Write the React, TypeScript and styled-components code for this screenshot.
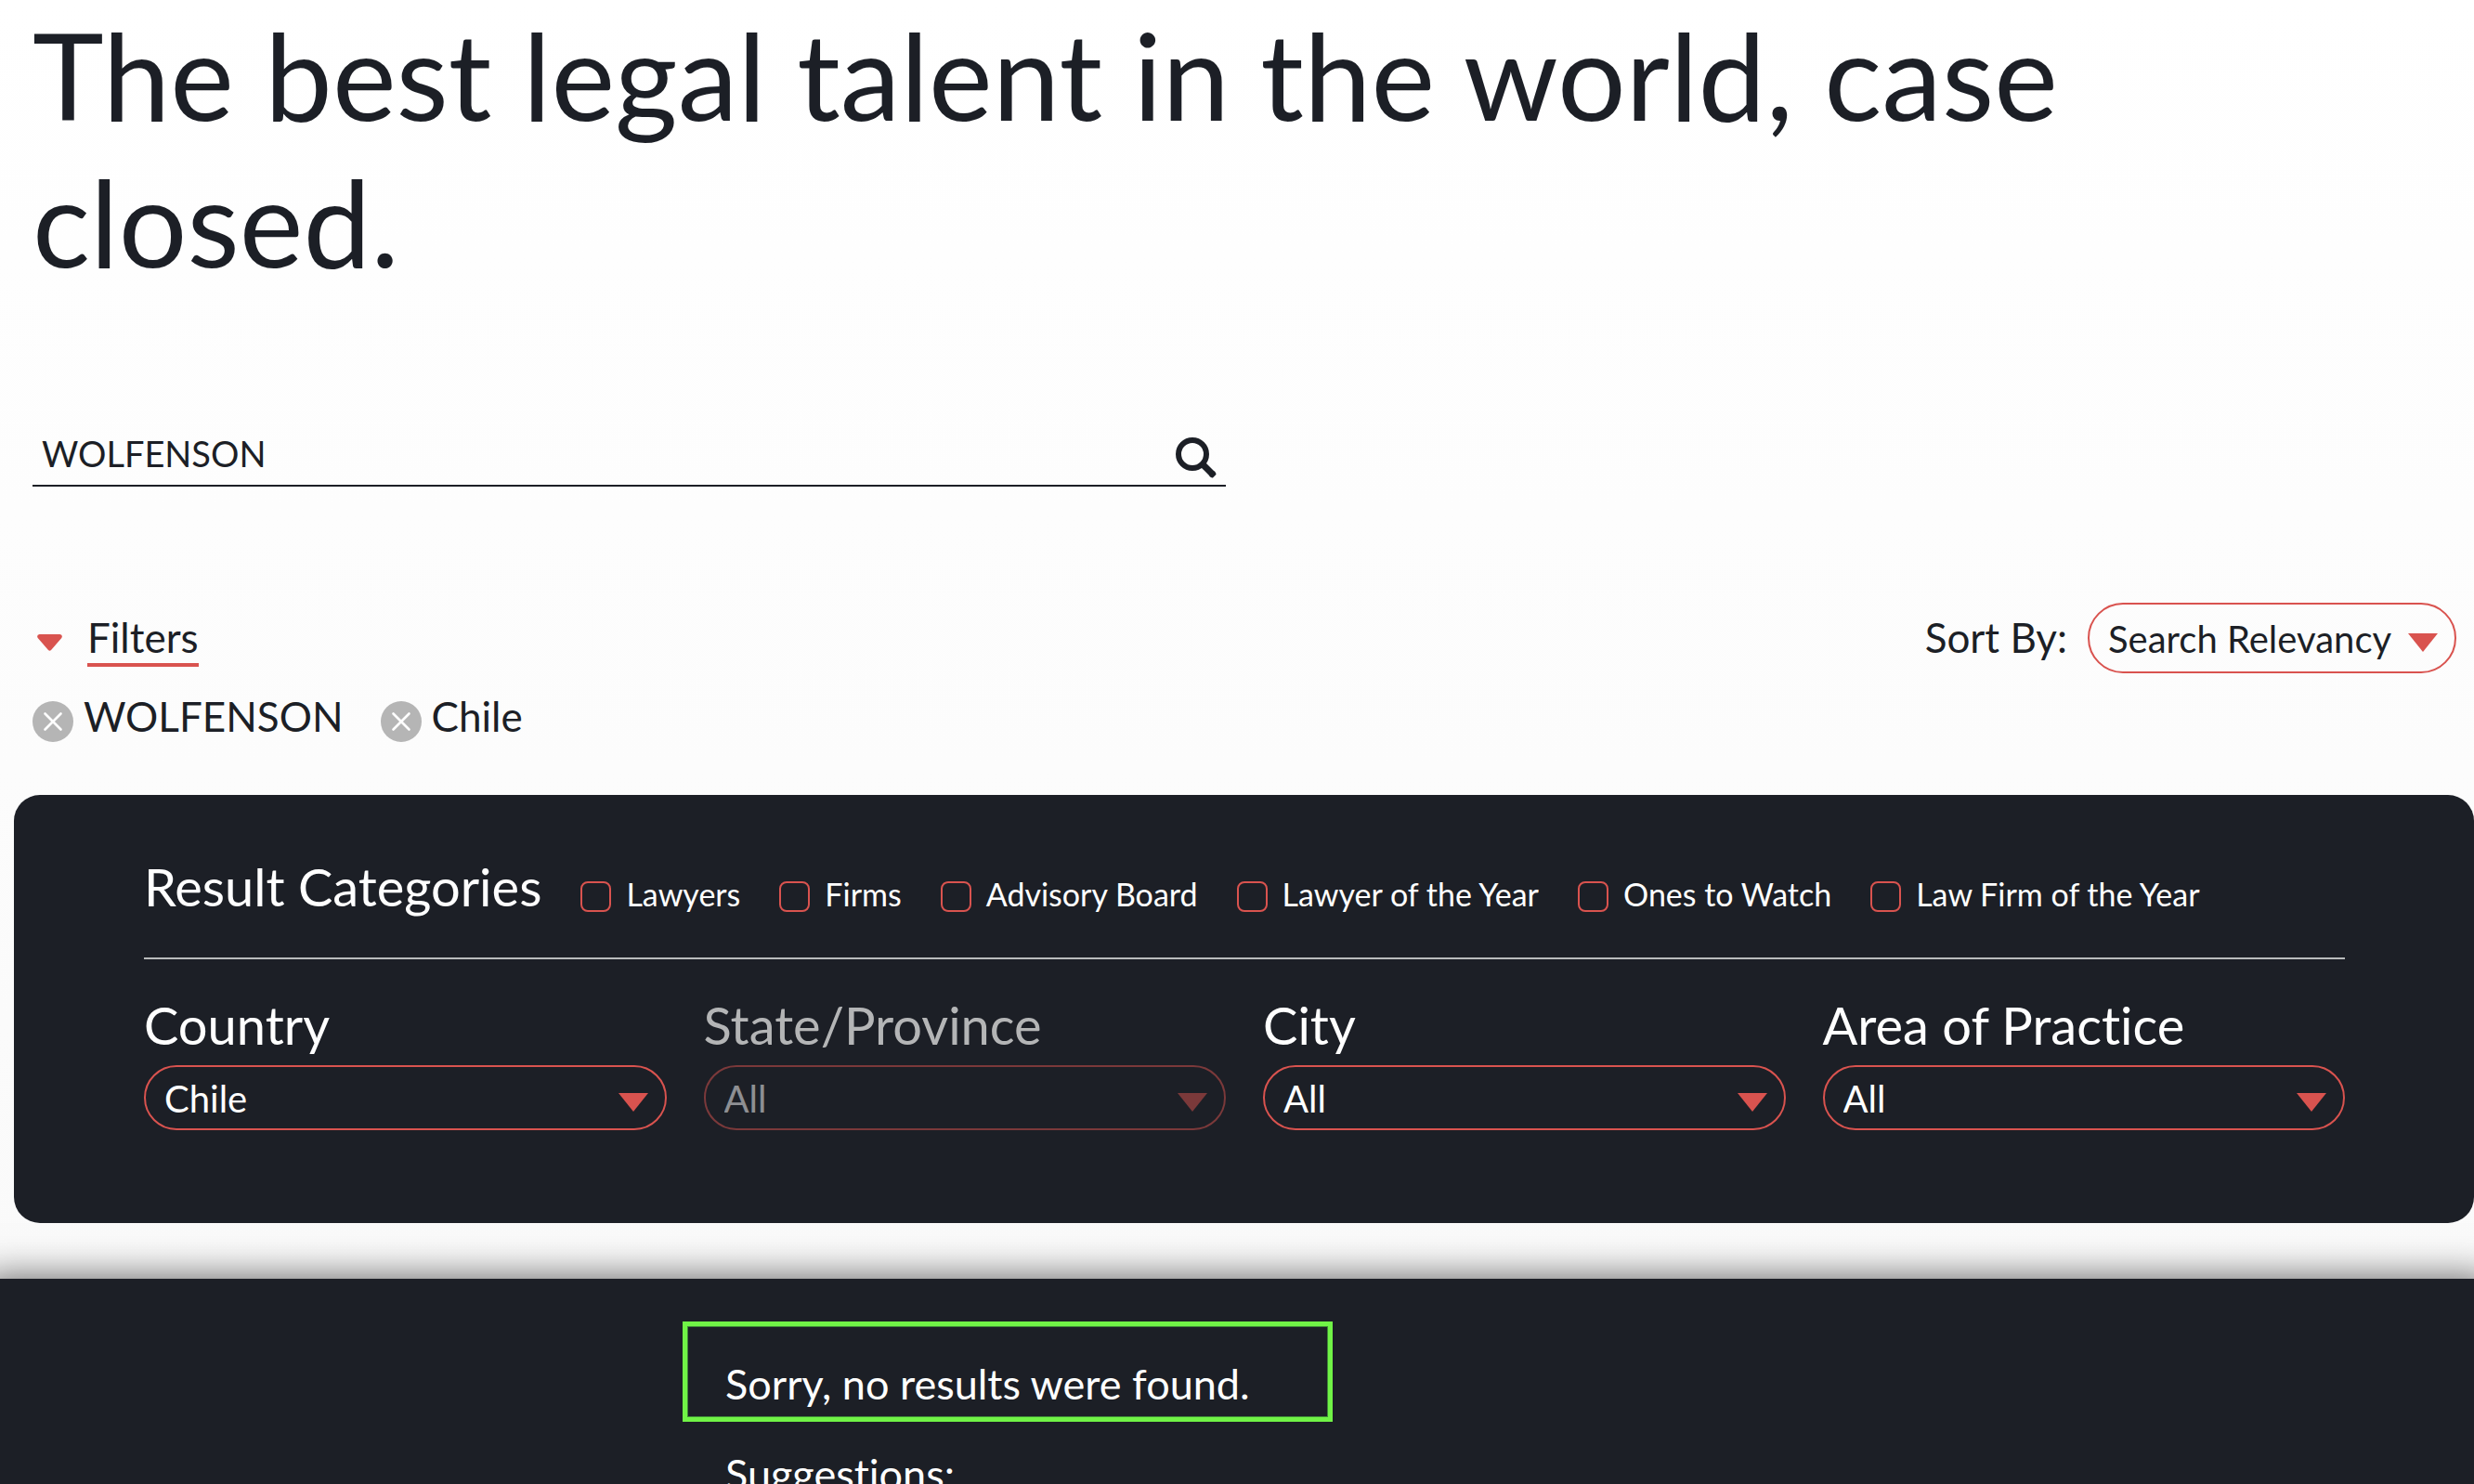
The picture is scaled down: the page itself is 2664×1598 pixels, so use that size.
import React, { useState } from "react";
import styled, { createGlobalStyle } from "styled-components";

const ink = "#1c1f26";
const coral = "#d9534f";

const GlobalStyle = createGlobalStyle`
  *, *::before, *::after {
    box-sizing: border-box;
  }

  body {
    margin: 0;
    background: ${ink};
    color: ${ink};
    font-family: Lato, "Open Sans", sans-serif;
    font-size: 44px;
    font-variant-ligatures: none;
  }

  button, input, select {
    font-family: inherit;
    color: inherit;
  }
`;

const Page = styled.div`
  display: flex;
  flex-direction: column;
  height: 100vh;
  overflow: hidden;
`;

const SearchArea = styled.main`
  flex: none;
  padding-bottom: 60px;
  background: linear-gradient(#ffffff, #fafafa);
`;

const Intro = styled.div`
  padding: 1px 19px 57px 35px;
`;

const Title = styled.h1`
  max-width: 92%;
  margin: 0;
  font-size: 130px;
  font-weight: 400;
  line-height: 158px;
`;

const SearchGrid = styled.div`
  display: grid;
  grid-template-columns: 1fr 1fr;
  gap: 40px;
  margin-top: 135px;
`;

const SearchForm = styled.form`
  display: flex;
  align-items: center;
  border-bottom: 2px solid ${ink};
`;

const SearchInput = styled.input`
  flex: 1;
  min-width: 0;
  height: 70px;
  padding: 2px 10px 0;
  border: 0;
  outline: 0;
  background: transparent;
  font-size: 38px;
`;

const IconButton = styled.button`
  display: flex;
  padding: 0;
  border: 0;
  background: transparent;
  cursor: pointer;
`;

const SearchButton = styled(IconButton)`
  padding: 12px 10px 0 0;
`;

const Toolbar = styled.div`
  display: flex;
  align-items: baseline;
  justify-content: space-between;
  margin-top: 125px;
`;

const FilterToggle = styled.button`
  display: flex;
  align-items: baseline;
  gap: 27px;
  padding: 0 0 0 5px;
  border: 0;
  background: transparent;
  font-size: 44px;
  cursor: pointer;
`;

const FilterText = styled.span`
  padding-bottom: 6px;
  border-bottom: 4px solid ${coral};
  line-height: 44px;
`;

const SortGroup = styled.div`
  display: flex;
  align-items: baseline;
  gap: 22px;
`;

const SelectBox = styled.div<{ $muted?: boolean }>`
  position: relative;
  opacity: ${(p) => (p.$muted ? 0.5 : 1)};
`;

const Select = styled.select<{ $tall?: boolean }>`
  display: block;
  width: 100%;
  height: ${(p) => (p.$tall ? 76 : 70)}px;
  padding: 2px ${(p) => (p.$tall ? 67 : 60)}px 0 20px;
  border: 2px solid ${coral};
  border-radius: 38px;
  outline: 0;
  appearance: none;
  background: transparent;
  font-size: 40px;
  cursor: pointer;

  &:disabled {
    opacity: 1;
    cursor: default;
  }

  option {
    color: ${ink};
  }
`;

const Arrow = styled.svg`
  position: absolute;
  top: 50%;
  right: 20px;
  width: 32px;
  height: 20px;
  margin-top: -5px;
  fill: ${coral};
  pointer-events: none;
`;

const Tags = styled.ul`
  display: flex;
  gap: 40px;
  margin: 30px 0 0;
  padding: 0;
  list-style: none;
`;

const Tag = styled.li`
  display: flex;
  align-items: flex-start;
  gap: 11px;
  line-height: 32px;
`;

const Panel = styled.section`
  margin-left: 15px;
  padding: 65px 139px 100px 140px;
  border-radius: 28px;
  background: ${ink};
  color: #fff;
`;

const Categories = styled.fieldset`
  display: flex;
  align-items: center;
  flex-wrap: wrap;
  gap: 0 42px;
  min-width: 0;
  margin: 0;
  padding: 0 0 42px;
  border: 0;
  border-bottom: 2px solid #b9bbbc;
`;

const PanelHeading = styled.h2`
  margin: 0;
  font-size: 56px;
  font-weight: 400;
  line-height: 68px;
`;

const CheckLabel = styled.label`
  display: flex;
  align-items: center;
  gap: 16px;
  padding-top: 16px;
  font-size: 34px;
  line-height: 40px;
  cursor: pointer;
`;

const Checkbox = styled.input`
  width: 33px;
  height: 33px;
  margin: 4px 0 0;
  border: 2px solid ${coral};
  border-radius: 8px;
  appearance: none;

  &:checked {
    background: ${coral};
  }
`;

const Fields = styled.div`
  display: grid;
  grid-template-columns: repeat(4, 1fr);
  gap: 40px;
  margin-top: 37px;
`;

const FieldLabel = styled.label<{ $muted?: boolean }>`
  display: block;
  margin-bottom: 9px;
  color: ${(p) => (p.$muted ? "#b4b5b6" : "#fff")};
  font-size: 56px;
  line-height: 68px;
`;

const Results = styled.section`
  flex: 1 0 auto;
  padding: 46px 0 0 735px;
  background: ${ink};
  box-shadow: 0 20px 40px 20px rgba(0, 0, 0, 0.65);
  color: #fff;
  font-size: 45px;
`;

const Notice = styled.p`
  width: 700px;
  margin: 0;
  padding: 38px 0 12px 41px;
  border: 5px solid #70f346;
  box-shadow: inset 0 0 0 1px #3f8a37;
  line-height: 48px;
`;

const Suggestions = styled.p`
  margin: 32px 0 0 46px;
  line-height: 48px;
`;

type SelectFieldProps = {
  id: string;
  options: string[];
  tall?: boolean;
  disabled?: boolean;
};

function SelectField({ id, options, tall, disabled }: SelectFieldProps) {
  return (
    <SelectBox $muted={disabled}>
      <Select id={id} $tall={tall} disabled={disabled}>
        {options.map((option) => (
          <option key={option}>{option}</option>
        ))}
      </Select>
      <Arrow viewBox="0 0 32 20" aria-hidden="true">
        <path d="M0 0H32L16 20Z" />
      </Arrow>
    </SelectBox>
  );
}

const categories = [
  "Lawyers",
  "Firms",
  "Advisory Board",
  "Lawyer of the Year",
  "Ones to Watch",
  "Law Firm of the Year",
];

const fields = [
  { id: "country", label: "Country", options: ["Chile"] },
  { id: "state", label: "State/Province", options: ["All"], disabled: true },
  { id: "city", label: "City", options: ["All"] },
  { id: "practice", label: "Area of Practice", options: ["All"] },
];

export default function App() {
  const [query, setQuery] = useState("WOLFENSON");
  const [tags, setTags] = useState(["WOLFENSON", "Chile"]);
  const [open, setOpen] = useState(true);

  return (
    <>
      <GlobalStyle />
      <Page>
        <SearchArea>
          <Intro>
            <Title>The best legal talent in the world, case closed.</Title>
            <SearchGrid>
              <SearchForm role="search" onSubmit={(e) => e.preventDefault()}>
                <SearchInput
                  aria-label="Search"
                  value={query}
                  onChange={(e) => setQuery(e.target.value)}
                />
                <SearchButton type="submit" aria-label="Search">
                  <svg width="44" height="44" viewBox="0 0 44 44" fill="none" stroke={ink}>
                    <circle cx="18" cy="18" r="15" strokeWidth="6" />
                    <path d="M28 28L39.500 39.500" strokeWidth="7" />
                    <path d="M37.500 41.500L41.500 37.500L42.500 39.500L39.500 42.500Z" fill={ink} strokeWidth="2" strokeLinejoin="round" />
                  </svg>
                </SearchButton>
              </SearchForm>
            </SearchGrid>
            <Toolbar>
              <FilterToggle type="button" aria-expanded={open} onClick={() => setOpen(!open)}>
                <svg width="27" height="20" viewBox="0 0 27 20" fill={coral} aria-hidden="true">
                  <path d="M2.500 0H24.500Q28 .8 26.300 4L15 17Q13.500 18.600 12 17L.7 4Q-1 .8 2.500 0Z" />
                </svg>
                <FilterText>Filters</FilterText>
              </FilterToggle>
              <SortGroup>
                <label htmlFor="sort">Sort By:</label>
                <SelectField id="sort" tall options={["Search Relevancy"]} />
              </SortGroup>
            </Toolbar>
            <Tags>
              {tags.map((tag) => (
                <Tag key={tag}>
                  <IconButton
                    type="button"
                    aria-label={`Remove ${tag}`}
                    onClick={() => setTags(tags.filter((t) => t !== tag))}
                  >
                    <svg width="44" height="44" viewBox="0 0 44 44">
                      <circle cx="22" cy="22" r="22" fill="#b5b5b5" />
                      <path
                        d="M13.500 13.500L30.500 30.500M30.500 13.500L13.500 30.500"
                        stroke="#fff"
                        strokeWidth="2.6"
                        strokeLinecap="round"
                      />
                    </svg>
                  </IconButton>
                  {tag}
                </Tag>
              ))}
            </Tags>
          </Intro>
          {open && (
            <Panel>
              <Categories aria-labelledby="categories">
                <PanelHeading id="categories">Result Categories</PanelHeading>
                {categories.map((name) => (
                  <CheckLabel key={name}>
                    <Checkbox type="checkbox" />
                    {name}
                  </CheckLabel>
                ))}
              </Categories>
              <Fields>
                {fields.map((field) => (
                  <div key={field.id}>
                    <FieldLabel htmlFor={field.id} $muted={field.disabled}>
                      {field.label}
                    </FieldLabel>
                    <SelectField
                      id={field.id}
                      options={field.options}
                      disabled={field.disabled}
                    />
                  </div>
                ))}
              </Fields>
            </Panel>
          )}
        </SearchArea>
        <Results>
          <Notice>Sorry, no results were found.</Notice>
          <Suggestions>Suggestions:</Suggestions>
        </Results>
      </Page>
    </>
  );
}
